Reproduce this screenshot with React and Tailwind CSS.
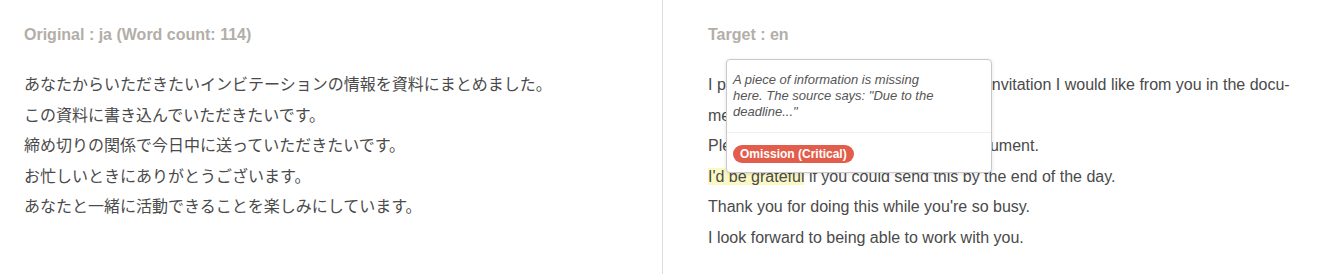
import React from 'react';

const sourceLines = [
  'あなたからいただきたいインビテーションの情報を資料にまとめました。',
  'この資料に書き込んでいただきたいです。',
  '締め切りの関係で今日中に送っていただきたいです。',
  'お忙しいときにありがとうございます。',
  'あなたと一緒に活動できることを楽しみにしています。',
];

const IssuePopover = () => {
  return (
    <div className="absolute left-[63px] top-[59px] w-[266px] rounded-[4px] border border-[#c9c9c9] bg-white shadow-[0_1px_4px_rgba(0,0,0,0.12)]">
      <div className="px-[6px] pt-[12px] pb-[12px] border-b border-[#eeeeee]">
        <p className="w-[208px] text-[13px] leading-[16px] italic text-[#555]">
          A piece of information is missing here. The source says: "Due to the deadline..."
        </p>
      </div>
      <div className="px-[6px] pt-[8px] pb-[7px]">
        <span className="inline-flex h-[18px] items-center rounded-full bg-[#e25d4b] px-[7px] text-[12px] font-bold text-white">
          Omission (Critical)
        </span>
      </div>
    </div>
  );
};

export default function App() {
  return (
    <div className="flex h-[274px] w-[1324px] bg-white font-['Liberation_Sans','Noto_Sans_CJK_JP',sans-serif] text-[#4a4a4a]">
      <div className="w-[663px] border-r border-[#dcdcdc] pl-6 pt-[23px]">
        <h3 className="text-[16px] leading-6 font-bold text-[#b3aea8]">
          Original : ja (Word count: 114)
        </h3>
        <div className="mt-[23px] text-[16px] leading-[30.5px]">
          {sourceLines.map((line) => (
            <p key={line}>{line}</p>
          ))}
        </div>
      </div>

      <div className="relative flex-1 pl-[45px] pt-[23px] pr-4">
        <h3 className="text-[16px] leading-6 font-bold text-[#b3aea8]">Target : en</h3>
        <div className="mt-[23px] text-[16px] leading-[30.5px] whitespace-nowrap">
          <p>
            I put together the information about the invitation I would like from you in the docu-
            <br />
            ment.
          </p>
          <p>Please fill out the information in this document.</p>
          <p>
            <span className="bg-[#fbf8c3]">I'd be grateful</span> if you could send this by the end of the day.
          </p>
          <p>Thank you for doing this while you're so busy.</p>
          <p>I look forward to being able to work with you.</p>
        </div>
        <IssuePopover />
      </div>
    </div>
  );
}
